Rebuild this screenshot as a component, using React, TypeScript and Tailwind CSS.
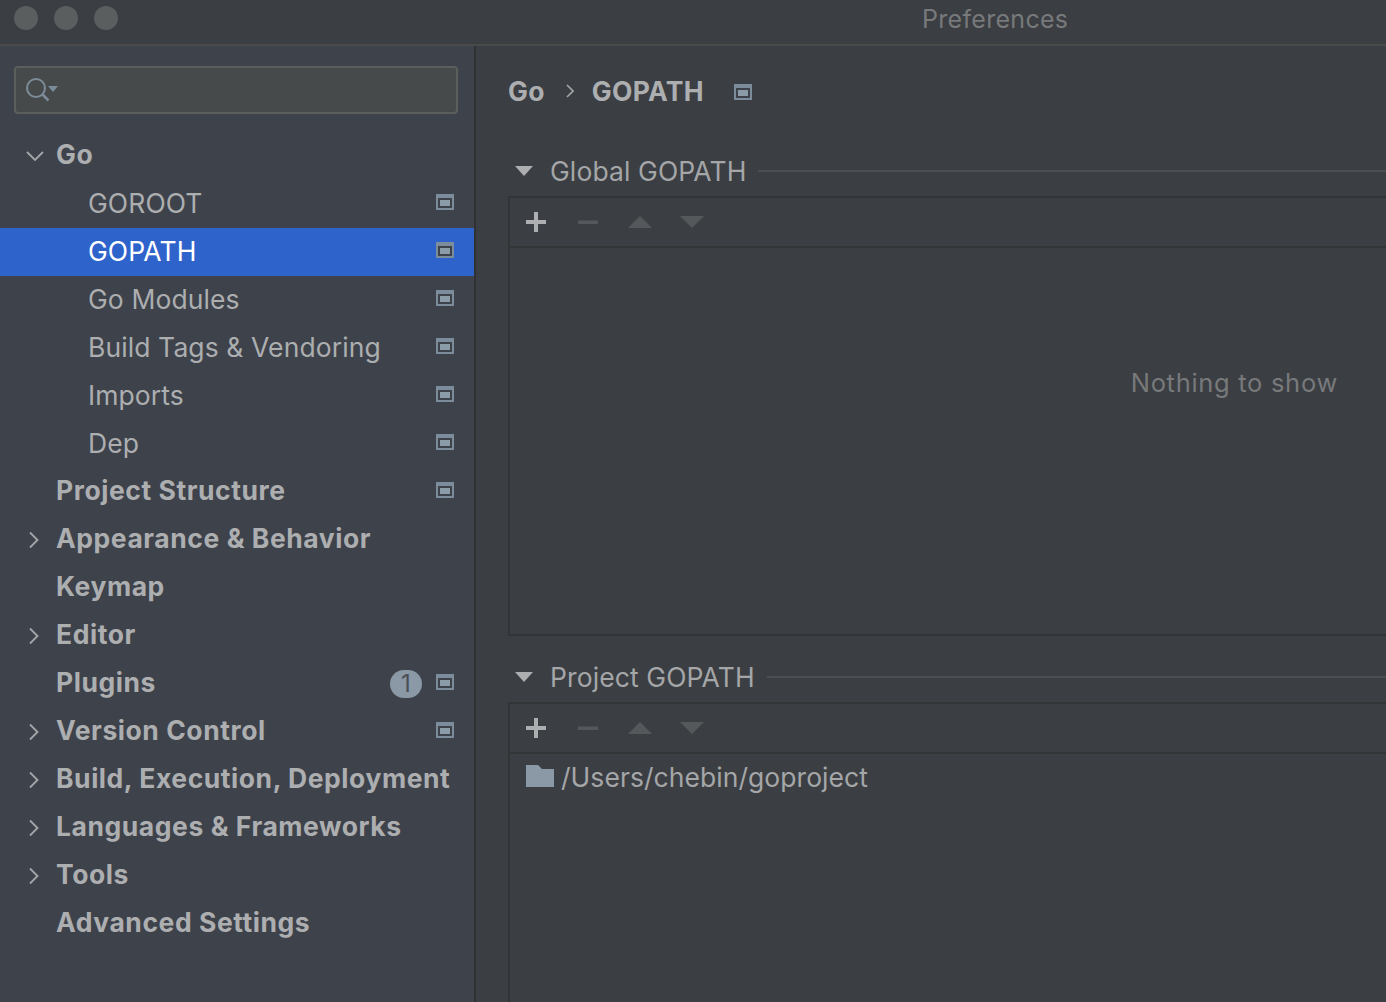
import React from 'react';

const font = { fontFamily: 'Inter, "Noto Sans", sans-serif' };

const PageIcon = () => (
  <svg width="18" height="16" viewBox="0 0 18 16" className="block">
    <rect width="18" height="16" fill="#7c8c9a" />
    <rect x="2" y="4" width="14" height="10" fill="#3e424b" />
    <rect x="4" y="6" width="10" height="6" fill="#8c9ba8" />
  </svg>
);

const Chevron = ({ open }: { open?: boolean }) => (
  <svg width="18" height="18" viewBox="0 0 18 18" fill="none" stroke="#a4a6a8" strokeWidth="1.8" className="block">
    {open ? <path d="M1 5l8 8 8-8" /> : <path d="M4 1.5l7.5 7.5L4 16.5" />}
  </svg>
);

type Row = {
  label: string;
  child?: boolean;
  arrow?: 'open' | 'closed';
  icon?: boolean;
  badge?: string;
  selected?: boolean;
};

const rows: Row[] = [
  { label: 'Go', arrow: 'open' },
  { label: 'GOROOT', child: true, icon: true },
  { label: 'GOPATH', child: true, icon: true, selected: true },
  { label: 'Go Modules', child: true, icon: true },
  { label: 'Build Tags & Vendoring', child: true, icon: true },
  { label: 'Imports', child: true, icon: true },
  { label: 'Dep', child: true, icon: true },
  { label: 'Project Structure', icon: true },
  { label: 'Appearance & Behavior', arrow: 'closed' },
  { label: 'Keymap' },
  { label: 'Editor', arrow: 'closed' },
  { label: 'Plugins', icon: true, badge: '1' },
  { label: 'Version Control', arrow: 'closed', icon: true },
  { label: 'Build, Execution, Deployment', arrow: 'closed' },
  { label: 'Languages & Frameworks', arrow: 'closed' },
  { label: 'Tools', arrow: 'closed' },
  { label: 'Advanced Settings' },
];

const TreeRow = ({ row }: { row: Row }) => (
  <div className={`h-12 flex items-center pr-5 ${row.selected ? 'bg-[#2f63cc]' : ''}`}>
    <div className="w-[56px] shrink-0 pl-[26px]">
      {row.arrow && <Chevron open={row.arrow === 'open'} />}
    </div>
    <span
      className={`text-[26.5px] whitespace-nowrap ${row.child ? 'ml-8 font-normal tracking-[0.1px]' : '-mt-0.5 font-bold tracking-[0.55px]'} ${row.selected ? 'text-white' : 'text-[#acaeb0]'}`}
    >
      {row.label}
    </span>
    <div className="ml-auto flex items-center">
      {row.badge && (
        <span className="w-8 h-[28px] mr-[14px] rounded-full bg-[#8a99a5] text-[#4a4f55] text-[24px] flex items-center justify-center">
          {row.badge}
        </span>
      )}
      {row.icon && (
        <div className="mb-1">
          <PageIcon />
        </div>
      )}
    </div>
  </div>
);

const Toolbar = () => (
  <div className="h-[50px] flex items-center border-b-2 border-[#323436] pl-[14px] gap-[28px] shrink-0">
    <svg width="24" height="24" viewBox="0 0 24 24" fill="#acaeb0" className="block">
      <rect x="10" y="2" width="4" height="20" />
      <rect x="2" y="10" width="20" height="4" />
    </svg>
    <svg width="24" height="24" viewBox="0 0 24 24" fill="#55585a" className="block">
      <rect x="2" y="10.5" width="20" height="3.5" />
    </svg>
    <svg width="24" height="24" viewBox="0 0 24 24" fill="#55585a" className="block">
      <path d="M12 6l12 12H0z" />
    </svg>
    <svg width="24" height="24" viewBox="0 0 24 24" fill="#55585a" className="block">
      <path d="M0 6h24L12 18z" />
    </svg>
  </div>
);

const SectionHead = ({ title }: { title: string }) => (
  <div className="flex items-center h-[50px]">
    <svg width="18" height="10" viewBox="0 0 18 10" fill="#acaeb0" className="block ml-[7px] shrink-0">
      <path d="M0 0h18L9 10z" />
    </svg>
    <span className="ml-[17px] mt-px text-[26.5px] tracking-[0.1px] text-[#a4a6a8] whitespace-nowrap">{title}</span>
    <div className="ml-3 flex-1 h-0.5 bg-[#4c4e50]" />
  </div>
);

export default function App() {
  return (
    <div className="w-[1386px] h-[1002px] overflow-hidden flex flex-col bg-[#3b3e42]" style={font}>
      {/* title bar */}
      <div className="h-[46px] shrink-0 flex items-center border-b-2 border-[#4a4a4b] bg-[#3b3e42] relative">
        <div className="flex gap-4 pl-[14px] -mt-[9px]">
          <div className="w-6 h-6 rounded-full bg-[#5a5e5f]" />
          <div className="w-6 h-6 rounded-full bg-[#5a5e5f]" />
          <div className="w-6 h-6 rounded-full bg-[#5a5e5f]" />
        </div>
        <span className="ml-[804px] -mt-[4px] text-[25px] tracking-[0.3px] text-[#77797b] whitespace-nowrap">Preferences</span>
      </div>

      <div className="flex flex-1 min-h-0">
        {/* sidebar */}
        <div className="w-[476px] shrink-0 bg-[#3e424b] border-r-2 border-[#2f3133]">
          <div className="pl-[14px] pr-4 pt-5">
            <div className="h-12 rounded-[4px] border-2 border-[#5c5e5e] bg-[#464a4a] flex items-center pl-[9px]">
              <svg width="34" height="26" viewBox="0 0 34 26" fill="none" className="block">
                <circle cx="11" cy="11" r="9" stroke="#7c8c9a" strokeWidth="2" />
                <path d="M17.5 17.5l6 6" stroke="#7c8c9a" strokeWidth="2.5" />
                <path d="M23 9h10l-5 6z" fill="#7c8c9a" />
              </svg>
            </div>
          </div>
          <div className="mt-[18px]">
            {rows.map((row) => (
              <TreeRow key={row.label} row={row} />
            ))}
          </div>
        </div>

        {/* content */}
        <div className="flex-1 min-w-0 pl-8 overflow-hidden">
          <div className="flex items-center h-[30px] mt-[30px]">
            <span className="mt-0.5 text-[26.5px] font-bold tracking-[0.3px] text-[#acaeb0]">Go</span>
            <svg width="8" height="14" viewBox="0 0 8 14" fill="none" stroke="#a4a6a8" strokeWidth="1.6" className="block ml-[21px]">
              <path d="M1 1l6 6-6 6" />
            </svg>
            <span className="ml-[18px] mt-0.5 text-[26.5px] font-bold tracking-[0.3px] text-[#acaeb0]">GOPATH</span>
            <div className="ml-[30px] mt-0.5">
              <PageIcon />
            </div>
          </div>

          <div className="mt-[40px]">
            <SectionHead title="Global GOPATH" />
          </div>
          <div className="h-[440px] border-2 border-r-0 border-[#323436] flex flex-col">
            <Toolbar />
            <div className="flex-1 flex items-start justify-end pr-[48px] pt-[116px]">
              <span className="text-[25.5px] tracking-[0.7px] text-[#77797b] whitespace-nowrap">Nothing to show</span>
            </div>
          </div>

          <div className="mt-4">
            <SectionHead title="Project GOPATH" />
          </div>
          <div className="h-[400px] border-2 border-r-0 border-[#323436] flex flex-col">
            <Toolbar />
            <div className="flex items-center h-12 pl-4">
              <svg width="28" height="24" viewBox="0 0 28 24" fill="#8a99a5" className="block -mt-1 shrink-0">
                <path d="M0 1h12l4 4h12v18H0z" />
              </svg>
              <span className="ml-[7px] text-[26.5px] tracking-[0.05px] text-[#a4a6a8] whitespace-nowrap">/Users/chebin/goproject</span>
            </div>
          </div>
        </div>
      </div>
    </div>
  );
}
